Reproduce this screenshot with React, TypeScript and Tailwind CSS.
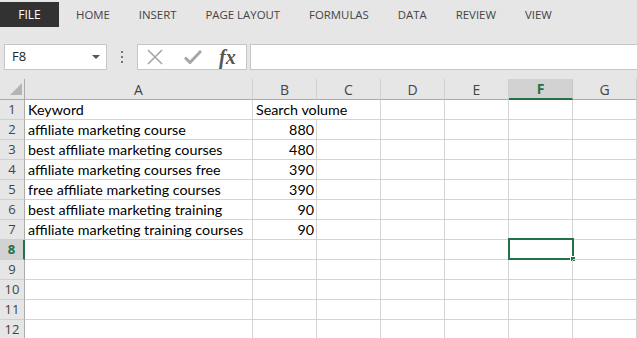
import { Fragment } from 'react';

const tabs = ['HOME', 'INSERT', 'PAGE LAYOUT', 'FORMULAS', 'DATA', 'REVIEW', 'VIEW'];
const cols = ['A', 'B', 'C', 'D', 'E', 'F', 'G'];

const rows: [string, string][] = [
  ['Keyword', 'Search volume'],
  ['affiliate marketing course', '880'],
  ['best affiliate marketing courses', '480'],
  ['affiliate marketing courses free', '390'],
  ['free affiliate marketing courses', '390'],
  ['best affiliate marketing training', '90'],
  ['affiliate marketing training courses', '90'],
  ['', ''],
  ['', ''],
  ['', ''],
  ['', ''],
  ['', ''],
];

const uiFont = { fontFamily: '"Open Sans", "Noto Sans", sans-serif' };
const cellFont = { fontFamily: 'Lato, "Liberation Sans", sans-serif' };

export default function App() {
  return (
    <div className="w-[637px] h-[338px] overflow-hidden bg-[#e6e6e6]" style={uiFont}>
      {/* Ribbon tabs */}
      <div className="h-[29px] pt-[2px] flex items-start text-[11.4px] text-[#444]">
        <div className="w-[59px] h-[25px] bg-[#323232] text-white text-[12px] flex items-center justify-center">FILE</div>
        <div className="flex gap-[29px] ml-[17px] h-[25px] items-center">
          {tabs.map((t) => (
            <span key={t}>{t}</span>
          ))}
        </div>
      </div>

      {/* Formula bar */}
      <div className="flex items-center h-[26px] mt-[15px] pl-[4px]">
        <div className="w-[103px] h-[26px] bg-white border border-[#c6c6c6] flex items-center justify-between pl-[7px] pr-[6px] text-[13px] text-[#222]">
          <span>F8</span>
          <svg width="8" height="4" viewBox="0 0 8 4">
            <path d="M0 0h8L4 4z" fill="#555" />
          </svg>
        </div>
        <div className="w-[30px] flex flex-col items-center gap-[3px]">
          <span className="w-[2px] h-[2px] bg-[#777]" />
          <span className="w-[2px] h-[2px] bg-[#777]" />
          <span className="w-[2px] h-[2px] bg-[#777]" />
        </div>
        <div className="w-[110px] h-[26px] bg-white border border-[#c6c6c6] flex items-center">
          <svg className="ml-[9px]" width="16" height="16" viewBox="0 0 16 16">
            <path d="M1 1L15 15M15 1L1 15" stroke="#a6a6a6" strokeWidth="1.6" />
          </svg>
          <svg className="ml-[21px]" width="18" height="14" viewBox="0 0 18 14">
            <path d="M1 7.5L6 12.5L17 1" stroke="#a6a6a6" strokeWidth="3" fill="none" />
          </svg>
          <span
            className="ml-[17px] text-[20px] italic font-bold text-[#555] leading-none"
            style={{ fontFamily: '"Liberation Serif", serif' }}
          >
            fx
          </span>
        </div>
        <div className="ml-[3px] flex-1 h-[26px] bg-white border border-[#c6c6c6] -mr-[4px]" />
      </div>

      {/* Sheet */}
      <div className="mt-[9px] grid grid-cols-[25px_228px_64px_64px_64px_64px_64px_64px] bg-white">
        {/* column headers */}
        <div className="h-[21px] bg-[#e6e6e6] border-r border-b border-[#ababab] relative">
          <svg className="absolute left-[10px] top-[4px]" width="12" height="12" viewBox="0 0 12 12">
            <path d="M12 0V12H0z" fill="#b4b4b4" />
          </svg>
        </div>
        {cols.map((c) => (
          <div
            key={c}
            className={
              c === 'F'
                ? 'h-[21px] bg-[#d2d2d2] border-r border-[#c8c8c8] border-b-2 border-b-[#217346] flex items-center justify-center text-[14px] font-bold text-[#217346]'
                : 'h-[21px] bg-[#e6e6e6] border-r border-[#cfcfcf] border-b border-b-[#ababab] flex items-center justify-center text-[14px] text-[#444]'
            }
          >
            {c}
          </div>
        ))}

        {/* rows */}
        {rows.map(([a, b], i) => {
          const n = i + 1;
          const sel = n === 8;
          return (
            <Fragment key={n}>
              <div
                className={
                  sel
                    ? 'h-[20px] bg-[#d2d2d2] border-r-2 border-r-[#217346] border-b border-b-[#cfcfcf] flex items-center justify-center text-[13px] font-bold text-[#217346]'
                    : 'h-[20px] bg-[#e6e6e6] border-r border-r-[#ababab] border-b border-b-[#cfcfcf] flex items-center justify-center text-[13px] text-[#444]'
                }
              >
                {n}
              </div>
              <div className="h-[20px] border-r border-b border-[#d4d4d4] pl-[3px] flex items-center text-[14.3px] text-black whitespace-nowrap" style={cellFont}>
                {a}
              </div>
              <div
                className={`h-[20px] border-b border-[#d4d4d4] flex items-center text-[14.3px] text-black whitespace-nowrap ${
                  n === 1 ? 'pl-[3px] overflow-visible relative z-10' : 'border-r justify-end pr-[2px]'
                }`}
                style={cellFont}
              >
                {b}
              </div>
              {cols.slice(2).map((c) => (
                <div key={c} className="h-[20px] border-r border-b border-[#d4d4d4] relative">
                  {sel && c === 'F' && (
                    <div className="absolute -left-[1px] -top-[2px] w-[66px] h-[22px] border-2 border-[#217346]">
                      <div className="absolute -right-[4px] -bottom-[4px] w-[6px] h-[6px] bg-[#217346] border border-white" />
                    </div>
                  )}
                </div>
              ))}
            </Fragment>
          );
        })}
      </div>
    </div>
  );
}
